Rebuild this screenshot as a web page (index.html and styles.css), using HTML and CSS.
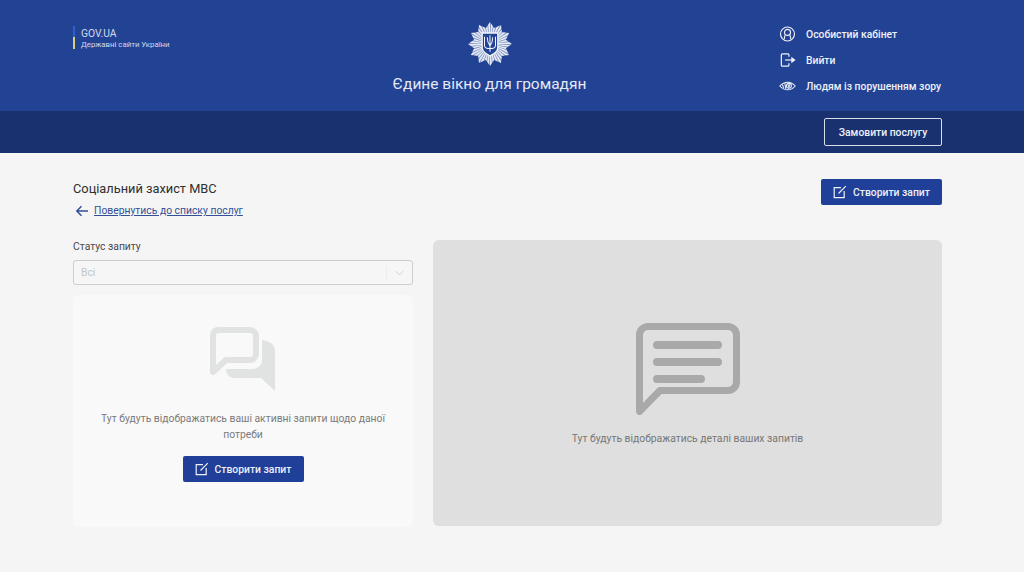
FILE: index.html
```html
<!DOCTYPE html>
<html lang="uk">
<head>
    <meta charset="UTF-8">
    <meta name="viewport" content="width=device-width, initial-scale=1.0">
    <title>Єдине вікно для громадян</title>
    <link rel="stylesheet" href="styles.css">
</head>
<body>
    <header class="top-bar">
        <a class="gov-link" href="#">
            <span class="gov-flag"></span>
            <span class="gov-text">
                <span class="gov-name">GOV.UA</span>
                <span class="gov-sub">Державні сайти України</span>
            </span>
        </a>

        <div class="brand">
            <svg class="brand-logo" viewBox="0 0 48 48">
                <polygon fill="#e4e9f4" points="24,0 28.53,6.6 36,3.2 37,11 44.800,12 41.400,19.470 48,24 41.400,28.530 44.800,36 37,37 36,44.800 28.530,41.400 24,48 19.470,41.400 12,44.800 11,37 3.200,36 6.600,28.530 0,24 6.600,19.470 3.200,12 11,11 12,3.200 19.470,6.600"/>
                <circle cx="24" cy="24" r="16" fill="none" stroke="#224294" stroke-width="16" stroke-dasharray="0.8 1.700" opacity="0.55"/>
                <path d="M15.500 12h17v15.500c0 5-4 7-8.500 9.500c-4.500-2.500-8.500-4.500-8.500-9.500z" fill="#224294" stroke="#f2f4fa" stroke-width="1.400"/>
                <path d="M24 14.500v18M18 16v9.500c0 2.500 2 3.500 6 3.500s6-1 6-3.500V16M21 16.500c0 3.500.3 6 3 9.500c2.700-3.500 3-6 3-9.500" fill="none" stroke="#f2f4fa" stroke-width="1.100"/>
            </svg>
            <div class="brand-title">Єдине вікно для громадян</div>
        </div>

        <nav class="user-nav">
            <a class="user-link" href="#">
                <svg class="user-icon" viewBox="0 0 18 18" fill="none" stroke="currentColor" stroke-width="1.200">
                    <circle cx="9" cy="9" r="7.400"/>
                    <circle cx="9" cy="7.300" r="3.200"/>
                    <path d="M6.600 10c-.8 1.200-1 2.800-1 4.600M11.400 10c.8 1.200 1 2.800 1 4.600"/>
                </svg>
                Особистий кабінет
            </a>
            <a class="user-link" href="#">
                <svg class="user-icon" viewBox="0 0 18 18" fill="none" stroke="currentColor" stroke-width="1.300">
                    <path d="M10.500 5.500V3.500a1 1 0 0 0-1-1H3.500a1 1 0 0 0-1 1v11a1 1 0 0 0 1 1h6a1 1 0 0 0 1-1v-2"/>
                    <path d="M6.500 9h9.500"/>
                    <path d="M13.700 6.800L16.500 9l-2.800 2.200z" fill="currentColor"/>
                </svg>
                Вийти
            </a>
            <a class="user-link" href="#">
                <svg class="user-icon" viewBox="0 0 18 18" fill="none" stroke="currentColor" stroke-width="1.100">
                    <path d="M.8 9C3.600 6 6.200 5 9.200 5s5.400 1 8 4c-2.600 3-5 4-8 4S3.600 12 .8 9z"/>
                    <circle cx="10.500" cy="8.800" r="2.600"/>
                    <path d="M9.500 7.200l1 3.200 1-3.200M3.500 7.300L5 10.800M6.200 6l1 6"/>
                </svg>
                Людям із порушенням зору
            </a>
        </nav>
    </header>

    <div class="sub-bar">
        <a class="order-btn" href="#">Замовити послугу</a>
    </div>

    <main class="content">
        <div class="page-head">
            <div>
                <h1 class="page-title">Соціальний захист МВС</h1>
                <div class="back-row">
                    <svg class="back-icon" viewBox="0 0 14 12" fill="none" stroke="currentColor" stroke-width="1.500">
                        <path d="M13 6H2M6.500 1.300L1.800 6l4.700 4.700"/>
                    </svg>
                    <a class="back-link" href="#">Повернутись до списку послуг</a>
                </div>
            </div>
            <a class="create-btn" href="#">
                <svg class="create-icon" viewBox="0 0 14 14" fill="none" stroke="currentColor" stroke-width="1.200">
                    <path d="M8 2.700H1.200v10h10V6"/>
                    <path d="M5.500 8.500L12.800 1.200"/>
                </svg>
                Створити запит
            </a>
        </div>

        <div class="columns">
            <section class="requests">
                <label class="field-label">Статус запиту</label>
                <div class="select-box">
                    <span>Всі</span>
                    <span class="select-arrow">
                        <svg viewBox="0 0 10 6" fill="none" stroke="currentColor" stroke-width="1.100">
                            <path d="M1 1l4 4 4-4"/>
                        </svg>
                    </span>
                </div>
                <div class="empty-card">
                    <svg class="chats-icon" viewBox="0 0 66 64">
                        <path fill="none" stroke="#e1e2e2" stroke-width="6" stroke-linejoin="round" d="M8 3h32a6 6 0 0 1 6 6v18a6 6 0 0 1-6 6H16L3 45V8a5 5 0 0 1 5-5z"/>
                        <path fill="#e1e2e2" d="M52 13c7 1 13 4 13 11v40L51 51H24c-4 0-8-4-8-9h26c6 0 10-4 10-9z"/>
                    </svg>
                    <p class="empty-text">Тут будуть відображатись ваші активні запити щодо даної потреби</p>
                    <a class="create-btn" href="#">
                        <svg class="create-icon" viewBox="0 0 14 14" fill="none" stroke="currentColor" stroke-width="1.200">
                            <path d="M8 2.700H1.200v10h10V6"/>
                            <path d="M5.500 8.500L12.800 1.200"/>
                        </svg>
                        Створити запит
                    </a>
                </div>
            </section>

            <section class="details">
                <svg class="details-icon" viewBox="0 0 104 92">
                    <path fill="none" stroke="#a9a9a9" stroke-width="7" stroke-linejoin="round" d="M12 3.500h80a8.500 8.500 0 0 1 8.500 8.500v47a8.500 8.500 0 0 1-8.500 8.500H24L3.500 88.500V12A8.500 8.500 0 0 1 12 3.500z"/>
                    <path fill="none" stroke="#a9a9a9" stroke-width="8" stroke-linecap="round" d="M21 22h61M21 39h61M21 56h44"/>
                </svg>
                <p class="details-text">Тут будуть відображатись деталі ваших запитів</p>
            </section>
        </div>
    </main>
</body>
</html>
```

FILE: styles.css
```css
* {
    box-sizing: border-box;
}
html, body {
    height: 100%;
}
body {
    margin: 0;
    background: #f5f5f5;
    font-family: Roboto, "Liberation Sans", sans-serif;
    color: #333;
    overflow: hidden;
}
a {
    color: inherit;
    text-decoration: none;
}

/* top bars */
.top-bar {
    height: 111px;
    padding: 0 82px 0 73px;
    background: #224294;
    color: #eef1f8;
    display: flex;
    justify-content: space-between;
}
.gov-link {
    width: 127px;
    margin-top: 26px;
    height: 23px;
    display: flex;
    gap: 6px;
}
.gov-flag {
    width: 2px;
    height: 23px;
    flex: none;
    background: linear-gradient(#2f5fc8 50%, #d8cf7a 50%);
}
.gov-text {
    display: flex;
    flex-direction: column;
    white-space: nowrap;
}
.gov-name {
    margin-top: 1px;
    font-size: 10.300px;
    line-height: 13px;
    color: #d3daec;
}
.gov-sub {
    font-size: 7.800px;
    line-height: 9px;
    color: #d3daec;
}
.brand {
    display: flex;
    flex-direction: column;
    align-items: center;
    padding-top: 22px;
}
.brand-logo {
    width: 44px;
    height: 44px;
}
.brand-title {
    margin-top: 9px;
    font-size: 15.500px;
    line-height: 18px;
    color: #e4e9f4;
}
.user-nav {
    width: 163px;
    padding-top: 25px;
    display: flex;
    flex-direction: column;
    gap: 8px;
}
.user-link {
    height: 18px;
    display: flex;
    align-items: center;
    gap: 10px;
    font-size: 10.350px;
    font-weight: 500;
    white-space: nowrap;
}
.user-icon {
    width: 17px;
    height: 18px;
    flex: none;
}
.sub-bar {
    height: 42px;
    padding: 7px 82px 0 0;
    background: #1a3170;
    display: flex;
    justify-content: flex-end;
    align-items: flex-start;
}
.order-btn {
    width: 118px;
    height: 28px;
    border: 1px solid #d9deeb;
    border-radius: 2px;
    color: #eef1f8;
    font-size: 10.350px;
    font-weight: 500;
    display: flex;
    align-items: center;
    justify-content: center;
}

/* content */
.content {
    padding: 26px 82px 0 73px;
}
.page-head {
    height: 61px;
    display: flex;
    justify-content: space-between;
    align-items: flex-start;
}
.page-title {
    margin: 2px 0 0;
    font-size: 12.800px;
    line-height: 15px;
    font-weight: 400;
    color: #2f2f2f;
}
.back-row {
    margin-top: 8px;
    padding-left: 2px;
    display: flex;
    align-items: center;
    gap: 5px;
    color: #344f96;
}
.back-icon {
    width: 14px;
    height: 12px;
}
.back-link {
    font-size: 10.350px;
    line-height: 13px;
    text-decoration: underline;
}
.create-btn {
    width: 121px;
    height: 26px;
    background: #1f3f99;
    border-radius: 2px;
    color: #eef1f8;
    font-size: 10.350px;
    font-weight: 500;
    display: flex;
    align-items: center;
    justify-content: center;
    gap: 6px;
}
.create-icon {
    width: 14px;
    height: 14px;
    flex: none;
}
.columns {
    display: grid;
    grid-template-columns: 340px 509px;
    column-gap: 20px;
}
.field-label {
    display: block;
    font-size: 10.350px;
    line-height: 13px;
    color: #4a4a4a;
}
.select-box {
    height: 25px;
    margin-top: 7px;
    padding-left: 7px;
    border: 1px solid #cdcdcd;
    border-radius: 3px;
    background: #f6f6f6;
    color: #c6c6c6;
    font-size: 10.350px;
    display: flex;
    justify-content: space-between;
    align-items: center;
}
.select-arrow {
    width: 26px;
    height: 13px;
    padding-top: 4px;
    border-left: 1px solid #ececec;
    color: #d0d0d0;
    display: flex;
    justify-content: center;
}
.select-arrow svg {
    width: 9px;
    height: 6px;
}
.empty-card {
    height: 232px;
    margin-top: 10px;
    padding-top: 32px;
    background: #f9f9f9;
    border-radius: 6px;
    display: flex;
    flex-direction: column;
    align-items: center;
}
.chats-icon {
    width: 66px;
    height: 64px;
}
.empty-text {
    width: 300px;
    margin: 20px 0 0;
    font-size: 10.350px;
    line-height: 16px;
    text-align: center;
    color: #7b7b7b;
}
.empty-card .create-btn {
    margin-top: 13px;
}
.details {
    height: 286px;
    padding-top: 83px;
    background: #dfdfdf;
    border-radius: 6px;
    display: flex;
    flex-direction: column;
    align-items: center;
}
.details-icon {
    width: 104px;
    height: 92px;
}
.details-text {
    margin: 17px 0 0;
    font-size: 10.350px;
    line-height: 13px;
    color: #777;
}
```
